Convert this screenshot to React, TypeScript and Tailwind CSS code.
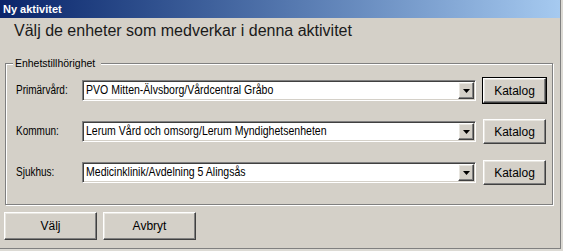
import React from "react";

const raised =
  "bg-[#d4d0c8] border border-t-white border-l-white border-r-[#404040] border-b-[#404040] shadow-[inset_-1px_-1px_0_#808080,inset_1px_1px_0_#e8e6e0]";

// the dialog font is narrower than Arial, squeeze it horizontally
function Combo({ value }: { value: string }) {
  return (
    <div className="w-[394px] h-[21px] flex bg-white border border-t-[#808080] border-l-[#808080] border-r-white border-b-white shadow-[inset_1px_1px_0_#404040,inset_-1px_-1px_0_#d4d0c8]">
      <div className="flex-1 pl-[3px] pt-[1px] text-[13px] leading-[16px] text-black whitespace-nowrap overflow-hidden">
        <span className="inline-block scale-x-[0.81] origin-left">{value}</span>
      </div>
      <div className={`w-[16px] h-[17px] mt-[1px] mr-[1px] flex items-center justify-center ${raised}`}>
        <svg width="7" height="4" viewBox="0 0 7 4">
          <path d="M0 0h7L3.5 4z" fill="#000" />
        </svg>
      </div>
    </div>
  );
}

function Katalog({ isDefault }: { isDefault?: boolean }) {
  return (
    <button
      className={`w-[63px] h-[25px] flex items-center justify-center text-[12px] text-black ${
        isDefault ? "outline outline-1 outline-black " : ""
      }${raised}`}
    >
      Katalog
    </button>
  );
}

const rows = [
  { label: "Primärvård:", value: "PVO Mitten-Älvsborg/Vårdcentral Gråbo", isDefault: true },
  { label: "Kommun:", value: "Lerum Vård och omsorg/Lerum Myndighetsenheten" },
  { label: "Sjukhus:", value: "Medicinklinik/Avdelning 5 Alingsås" },
];

export default function App() {
  return (
    <div className="w-[563px] h-[251px] bg-[#dcdad4] overflow-hidden" style={{ fontFamily: '"Liberation Sans", Arial, sans-serif' }}>
      <div className="w-[561px] h-[249px] bg-[#d4d0c8] border-r border-b border-[#808080] flex flex-col">
        <div className="h-[18px] bg-gradient-to-r from-[#0a246a] to-[#a6caf0] text-white font-bold text-[11px] leading-[18px] px-[3px]">
          Ny aktivitet
        </div>
        <h1 className="mt-[3px] ml-[14px] text-[16px] leading-[20px] text-[#1a1a1a]">
          Välj de enheter som medverkar i denna aktivitet
        </h1>
        <div className="relative mt-[22px] ml-[5px] w-[548px] h-[142px] border border-[#808080] shadow-[inset_1px_1px_0_#fff,1px_1px_0_#fff]">
          <span className="absolute -top-[8px] left-[7px] px-[2px] bg-[#d4d0c8] text-[11px] leading-[14px] text-black">
            <span className="inline-block scale-x-[0.95] origin-left">Enhetstillhörighet</span>
          </span>
          <div className="flex flex-col gap-[16px] mt-[14px] ml-[10px]">
            {rows.map((r) => (
              <div key={r.label} className="h-[25px] flex items-center">
                <span className="w-[66px] text-[12.5px] text-black whitespace-nowrap">
                  <span className="inline-block scale-x-[0.8] origin-left">{r.label}</span>
                </span>
                <Combo value={r.value} />
                <div className="ml-[7px]">
                  <Katalog isDefault={r.isDefault} />
                </div>
              </div>
            ))}
          </div>
        </div>
        <div className="flex gap-[6px] mt-[7px] ml-[4px]">
          <button className={`w-[93px] h-[28px] text-[12px] text-black ${raised}`}>Välj</button>
          <button className={`w-[93px] h-[28px] text-[12px] text-black ${raised}`}>Avbryt</button>
        </div>
      </div>
    </div>
  );
}
